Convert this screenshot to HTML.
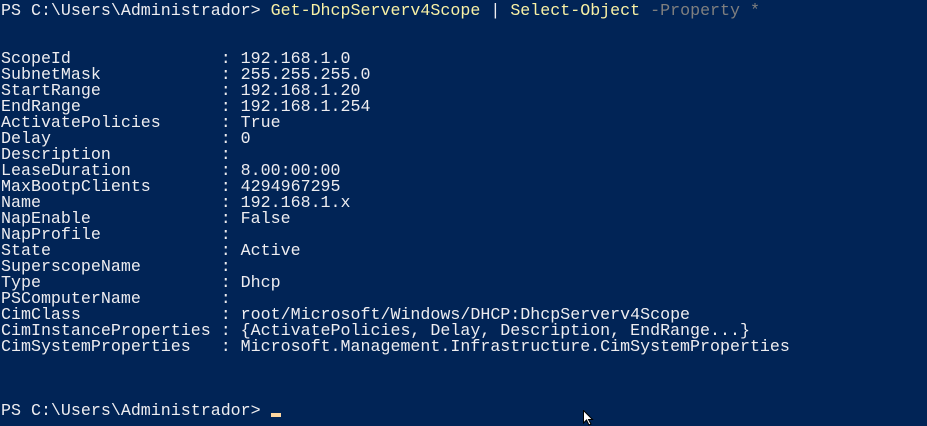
<!DOCTYPE html>
<html><head><style>
html,body{margin:0;padding:0;background:#012456;width:927px;height:425px;overflow:hidden}
pre{margin:0;position:absolute;left:1px;top:3px;font-family:"Liberation Mono",monospace;font-size:16.65px;line-height:16px;color:#eeedf0;letter-spacing:0}
.y{color:#f9f1a5}.g{color:#7f7f7f}
.cur{position:absolute;left:271px;top:413px;width:10px;height:4px;background:#fed7a0}
</style></head><body>
<pre>PS C:\Users\Administrador&gt; <span class="y">Get-DhcpServerv4Scope</span> | <span class="y">Select-Object</span> <span class="g">-Property *</span>


ScopeId               : 192.168.1.0
SubnetMask            : 255.255.255.0
StartRange            : 192.168.1.20
EndRange              : 192.168.1.254
ActivatePolicies      : True
Delay                 : 0
Description           :
LeaseDuration         : 8.00:00:00
MaxBootpClients       : 4294967295
Name                  : 192.168.1.x
NapEnable             : False
NapProfile            :
State                 : Active
SuperscopeName        :
Type                  : Dhcp
PSComputerName        :
CimClass              : root/Microsoft/Windows/DHCP:DhcpServerv4Scope
CimInstanceProperties : {ActivatePolicies, Delay, Description, EndRange...}
CimSystemProperties   : Microsoft.Management.Infrastructure.CimSystemProperties



PS C:\Users\Administrador&gt; </pre>
<div class="cur"></div>
<svg style="position:absolute;left:583px;top:410px" width="12" height="16" viewBox="0 0 12 16"><path d="M0.5 0.5 L0.5 13 L3.5 10 L6 15 L8 14 L5.5 9.5 L9.5 9.5 Z" fill="#fff" stroke="#000" stroke-width="1"/></svg>
</body></html>
